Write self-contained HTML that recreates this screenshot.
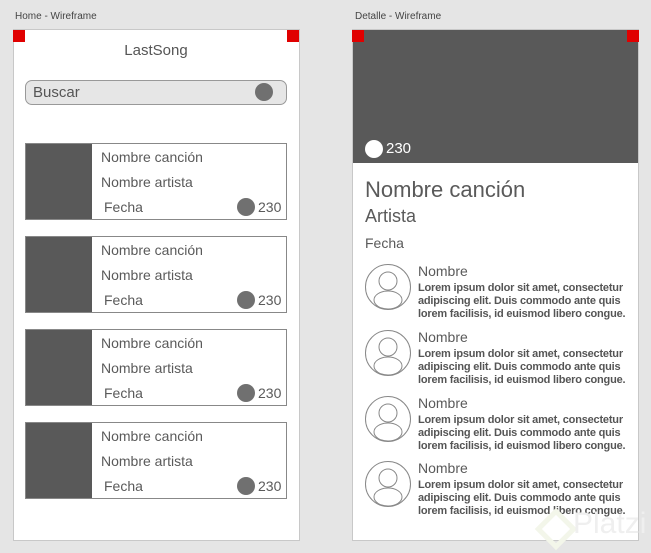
<!DOCTYPE html>
<html><head><style>
body{margin:0;width:651px;height:553px;background:#e5e5e5;font-family:"Liberation Sans",Arial,sans-serif;position:relative;overflow:hidden;color:#5a5a5a}
.a{position:absolute}
.lbl{font-size:10px;color:#444;top:11px}
.frame{background:#fff;border:1px solid #c8c8c8;top:29px;width:285px;height:510px}
.red{width:12px;height:12px;background:#e00000;top:30px}
.card{left:25px;width:260px;height:75px;border:1px solid #888;background:#fff}
.card .img{position:absolute;left:0;top:0;width:66px;height:75px;background:#595959}
.card .t{position:absolute;font-size:14px;color:#5a5a5a;white-space:nowrap}
.dot{position:absolute;width:18px;height:18px;border-radius:50%;background:#707070}
.cm{left:365px;width:270px;height:60px}
.cm .n{position:absolute;left:53px;top:-1px;font-size:14px;color:#5a5a5a}
.cm .p{position:absolute;left:53px;top:18px;font-size:11px;line-height:13px;color:#555;font-weight:bold;letter-spacing:-0.2px;white-space:nowrap}
</style></head><body>
<div class="a lbl" style="left:15px">Home - Wireframe</div>
<div class="a lbl" style="left:355px">Detalle - Wireframe</div>
<div class="a frame" style="left:13px"></div>
<div class="a frame" style="left:352px"></div>
<div class="a" style="left:353px;top:30px;width:285px;height:133px;background:#595959"></div>
<div class="a red" style="left:13px"></div>
<div class="a red" style="left:287px"></div>
<div class="a red" style="left:352px"></div>
<div class="a red" style="left:627px"></div>
<div class="a" style="left:0;width:312px;text-align:center;top:42px;font-size:15px;color:#555">LastSong</div>
<div class="a" style="left:25px;top:80px;width:260px;height:23px;border:1px solid #999;border-radius:7px;background:#e6e6e6"></div>
<div class="a" style="left:33px;top:84px;font-size:15px;color:#555">Buscar</div>
<div class="dot" style="left:255px;top:83px"></div>

<div class="a card" style="top:143px"><div class="img"></div><div class="t" style="left:75px;top:5px">Nombre canción</div><div class="t" style="left:75px;top:30px">Nombre artista</div><div class="t" style="left:78px;top:55px">Fecha</div><div class="dot" style="left:211px;top:54px"></div><div class="t" style="left:232px;top:55px">230</div></div>
<div class="a card" style="top:236px"><div class="img"></div><div class="t" style="left:75px;top:5px">Nombre canción</div><div class="t" style="left:75px;top:30px">Nombre artista</div><div class="t" style="left:78px;top:55px">Fecha</div><div class="dot" style="left:211px;top:54px"></div><div class="t" style="left:232px;top:55px">230</div></div>
<div class="a card" style="top:329px"><div class="img"></div><div class="t" style="left:75px;top:5px">Nombre canción</div><div class="t" style="left:75px;top:30px">Nombre artista</div><div class="t" style="left:78px;top:55px">Fecha</div><div class="dot" style="left:211px;top:54px"></div><div class="t" style="left:232px;top:55px">230</div></div>
<div class="a card" style="top:422px"><div class="img"></div><div class="t" style="left:75px;top:5px">Nombre canción</div><div class="t" style="left:75px;top:30px">Nombre artista</div><div class="t" style="left:78px;top:55px">Fecha</div><div class="dot" style="left:211px;top:54px"></div><div class="t" style="left:232px;top:55px">230</div></div>

<div class="dot" style="left:365px;top:140px;background:#fff"></div>
<div class="a" style="left:386px;top:140px;font-size:15px;color:#fff">230</div>
<div class="a" style="left:365px;top:177px;font-size:22px;color:#5a5a5a">Nombre canción</div>
<div class="a" style="left:365px;top:206px;font-size:18px;color:#5a5a5a">Artista</div>
<div class="a" style="left:365px;top:235px;font-size:14px;color:#5a5a5a">Fecha</div>

<div class="a cm" style="top:264px"><svg width="48" height="48" viewBox="0 0 48 48" style="position:absolute;left:-1px;top:-1px"><defs><clipPath id="c"><circle cx="24" cy="24" r="22.5"/></clipPath></defs><circle cx="24" cy="24" r="22.5" fill="none" stroke="#888"/><circle cx="24" cy="18" r="9" fill="none" stroke="#888"/><ellipse cx="24" cy="37" rx="14" ry="9" fill="none" stroke="#888" clip-path="url(#c)"/></svg><div class="n">Nombre</div><div class="p">Lorem ipsum dolor sit amet, consectetur<br>adipiscing elit. Duis commodo ante quis<br>lorem facilisis, id euismod libero congue.</div></div>
<div class="a cm" style="top:330px"><svg width="48" height="48" viewBox="0 0 48 48" style="position:absolute;left:-1px;top:-1px"><circle cx="24" cy="24" r="22.5" fill="none" stroke="#888"/><circle cx="24" cy="18" r="9" fill="none" stroke="#888"/><ellipse cx="24" cy="37" rx="14" ry="9" fill="none" stroke="#888" clip-path="url(#c)"/></svg><div class="n">Nombre</div><div class="p">Lorem ipsum dolor sit amet, consectetur<br>adipiscing elit. Duis commodo ante quis<br>lorem facilisis, id euismod libero congue.</div></div>
<div class="a cm" style="top:396px"><svg width="48" height="48" viewBox="0 0 48 48" style="position:absolute;left:-1px;top:-1px"><circle cx="24" cy="24" r="22.5" fill="none" stroke="#888"/><circle cx="24" cy="18" r="9" fill="none" stroke="#888"/><ellipse cx="24" cy="37" rx="14" ry="9" fill="none" stroke="#888" clip-path="url(#c)"/></svg><div class="n">Nombre</div><div class="p">Lorem ipsum dolor sit amet, consectetur<br>adipiscing elit. Duis commodo ante quis<br>lorem facilisis, id euismod libero congue.</div></div>
<div class="a cm" style="top:461px"><svg width="48" height="48" viewBox="0 0 48 48" style="position:absolute;left:-1px;top:-1px"><circle cx="24" cy="24" r="22.5" fill="none" stroke="#888"/><circle cx="24" cy="18" r="9" fill="none" stroke="#888"/><ellipse cx="24" cy="37" rx="14" ry="9" fill="none" stroke="#888" clip-path="url(#c)"/></svg><div class="n">Nombre</div><div class="p">Lorem ipsum dolor sit amet, consectetur<br>adipiscing elit. Duis commodo ante quis<br>lorem facilisis, id euismod libero congue.</div></div>

<div class="a" style="left:541px;top:514px;width:20px;height:20px;border:5px solid #f3f6ea;transform:rotate(45deg)"></div>
<div class="a" style="left:573px;top:507px;font-size:30px;color:#efefef">Platzi</div>
</body></html>
